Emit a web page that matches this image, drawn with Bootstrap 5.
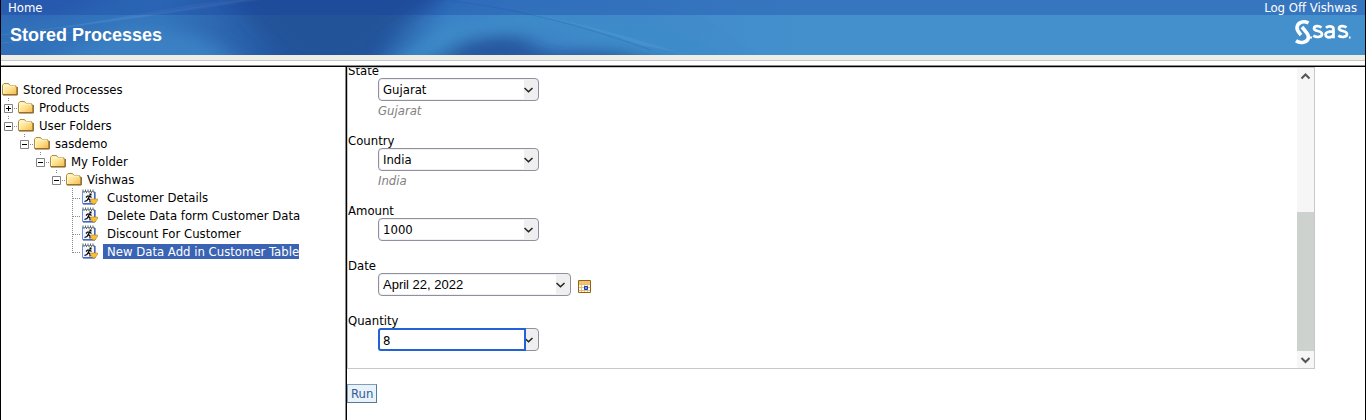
<!DOCTYPE html>
<html lang="en">
<head>
<meta charset="utf-8">
<meta name="viewport" content="width=device-width, initial-scale=1">
<title>Stored Processes</title>
<link href="https://cdn.jsdelivr.net/npm/bootstrap@5.3.0/dist/css/bootstrap.min.css" rel="stylesheet">
<style>
body{font:13px/18px "DejaVu Sans Condensed","DejaVu Sans",sans-serif;color:#000;background:#fff}
.shell{border:solid #000;border-width:0 1px}
.banner{background:#4490cd;overflow:hidden}
.banner .swirl{left:0;top:0}
.topbar{height:15px;line-height:16px;padding:0 8px 0 7px;background:rgba(24,60,160,.3)}
.topbar a{color:#fff;text-decoration:none}
.titlebar{height:40px;padding:0 14px 0 9px}
.titlebar h1{font:bold 18px/40px "Liberation Sans",sans-serif;margin:0;color:#fff}
.strip{height:6px;background:#eeeee6;border-bottom:1px solid #c8c8c8}
.rule{height:5px;border-bottom:1px solid #8c8c8c}
.panes{border-top:1px solid #000}
.tree{width:346px;padding-top:13px;border-right:1px solid #000;box-shadow:inset -1px 0 #8c8c8c}
.tree ul ul ul{padding-left:16px}
.node{height:18px;white-space:nowrap;padding-left:1px}
.node a{color:#000;text-decoration:none;line-height:15px;padding:0 0 0 4px;margin-left:1px}
.leaf{padding-left:7px}
.leaf a{margin-left:5px}
.node a.chosen{background:#3a63b3;color:#fff}
.work{min-height:353px}
.frame{margin-right:50px;border:1px solid #c8c8c8;height:302px}
.prompts{overflow:hidden;padding:0 0 17px}
.field{padding-bottom:16px;flex:none}
.field:last-child{padding-bottom:0}
.field label{display:block;height:16px;line-height:18px}
.field .ctl{margin-left:30px;width:161px;height:23px}
.field .ctl.wide{width:193px}
.hinted{padding-bottom:12px}
.hint{margin-left:30px;line-height:19px;color:#808080;font-style:italic}
.combo{display:block;width:100%;height:100%;appearance:none;border:1px solid #8f8f9d;border-radius:4px;padding:1px 16px 0 4px;font:inherit;color:#000;outline:0;
 background:url("data:image/svg+xml,%3Csvg xmlns='http://www.w3.org/2000/svg' width='14' height='8'%3E%3Cpath d='M.5 2 4.500 5.800 8.500 2' fill='none' stroke='%23222' stroke-width='1.500'/%3E%3C/svg%3E") no-repeat right 0 center,linear-gradient(#efeff0,#efeff0) no-repeat right/14px 100%,#fff;
 box-shadow:inset 0 0 0 1px #f0f0f4}
.wide .combo{font-family:"Liberation Sans",sans-serif;padding-top:0}
.typed{left:0;top:0;width:148px;height:23px;border:2px solid #2361d8;border-radius:3px 0 0 3px;padding:1px 3px 0;font:inherit;outline:0;background:#fff}
.cal{padding:0;border:0;background:none;line-height:0;margin:3px 0 0 7px}
.scroll{width:17px;background:#f6f6f6}
.scroll button{border:0;background:none;padding:0;height:17px;line-height:0}
.thumb{height:139px;background:#cdd2ce}
.run{margin:15px 0 0;padding:0 3px;height:19px;line-height:17px;border:1px solid #7f9fb8;border-right-color:#557a98;border-bottom-color:#557a98;background:#e8f2f8;color:#315c96}
</style>
</head>
<body>
<svg width="0" height="0" class="position-absolute" aria-hidden="true">
<defs>
<linearGradient id="fold" x1="0" y1="0" x2="1" y2="1"><stop offset="0" stop-color="#fffbd0"/><stop offset=".5" stop-color="#ffe291"/><stop offset="1" stop-color="#f2b94c"/></linearGradient>
<symbol id="folder" viewBox="0 0 16 14"><path d="M.5 12.500V3.200L2 1.500h4.500L8 3.500h5.500v1.300h1.200v7.700z" fill="url(#fold)" stroke="#b08a3a"/><path d="M1.500 11.500V5l1-1h11" fill="none" stroke="#fff8cf"/><path d="M1 13h14.300V5" fill="none" stroke="#7d5718"/></symbol>
<symbol id="minus" viewBox="0 0 16 18"><path d="M6.500 0v4M12 10.500h4" stroke="#888" stroke-dasharray="1 1"/><path d="M2.500 6.500h8v8h-8z" fill="#fff" stroke="#848484"/><path d="M4 10.500h5" stroke="#000"/></symbol>
<symbol id="plus" viewBox="0 0 16 18"><use href="#minus"/><path d="M6.500 8v5" stroke="#000"/></symbol>
<symbol id="branch" viewBox="0 0 9 18"><path d="M.5 0v18M1 10.500h8" stroke="#888" stroke-dasharray="1 1"/></symbol>
<symbol id="branchend" viewBox="0 0 9 18"><path d="M.5 0v11M1 10.500h8" stroke="#888" stroke-dasharray="1 1"/></symbol>
<symbol id="proc" viewBox="0 0 17 16"><path d="M1.500 2.500h12v12h-12z" fill="#f2f6ff" stroke="#6f8fe0"/><path d="M2 15h12V3" fill="none" stroke="#1d3f9c"/><path d="M1.500 1.500h12" stroke="#66662a" stroke-width="2" stroke-dasharray="1 1.500"/><path d="M2.500 3.500h11" stroke="#66662a" stroke-dasharray="1 1.500"/><path d="M8.500 4.500h2v2h-2z"/><path d="M8.700 6.500 7.200 9.800M7.200 9.500 6 11.500 3.500 12.500M7.500 9.500l1.500 1.500v2.500M5 8.500 6.500 7h2l2 1.500" fill="none" stroke="#000" stroke-width="1.200"/><path d="M9.500 10h7v1.500L14 15h-2l-2.500-3.500z" fill="#fbc02f" stroke="#b98216" stroke-width=".6"/></symbol>
</defs>
</svg>
<div class="shell">
<header class="banner position-relative">
 <svg class="swirl position-absolute" width="800" height="55" viewBox="0 0 800 55" aria-hidden="true">
  <defs>
   <linearGradient id="base"><stop offset="0" stop-color="#3170b9"/><stop offset=".2" stop-color="#3476bd"/><stop offset=".36" stop-color="#24559f"/><stop offset=".46" stop-color="#23559f"/><stop offset=".56" stop-color="#3a82c6"/><stop offset=".8" stop-color="#4089ca"/><stop offset="1" stop-color="#4490cd"/></linearGradient>
   <filter id="soft" x="-30%" y="-60%" width="160%" height="220%"><feGaussianBlur stdDeviation="12 7"/></filter>
  </defs>
  <path fill="url(#base)" d="M0 0h800v55H0z"/>
  <g filter="url(#soft)">
   <path d="M0-20h150L60 15 0 22z" fill="#2f66b5"/>
   <path d="M20 75 130 25l70 12 60 38z" fill="#3b80c3"/>
   <path d="M210-20h260L400 22 360 60H290z" fill="#235299"/>
   <path d="M370 75 440 28 530 10l150 20 60 40H640L560 25l-80 5-70 40z" fill="#3e8bc9"/>
   <path d="M425 65 465 40l50-5 30 17 70-1 65 17z" fill="#26599f"/>
  </g>
  <path d="M0 35Q120 20 230 2L300-8M0 43Q40 40 80 30" fill="none" stroke="#5b96d2" stroke-opacity=".3"/>
  <path d="M50 30Q130 14 220 0h40Q140 18 50 30" fill="#6ea4d8" fill-opacity=".15"/>
  <path d="M450 0Q550 12 680 53L640 45Q550 12 450 0" fill="#6fb0e0" fill-opacity=".2"/>
  <path d="M450 1Q540 11 650 50" fill="none" stroke="#2565ac" stroke-opacity=".35"/>
 </svg>
 <nav class="topbar position-relative d-flex justify-content-between"><a href="#">Home</a><a href="#">Log Off Vishwas</a></nav>
 <div class="titlebar position-relative d-flex justify-content-between">
  <h1>Stored Processes</h1>
  <div class="d-flex pt-1"><svg width="57" height="26" viewBox="0 0 57 26" role="img" aria-label="SAS" fill="none" stroke="#fff">
   <path d="M14.500 4C9 1.300 3.500 3.500 3 8.500c-.2 3 1.500 4.500 4 7.500" stroke-width="3.600"/>
   <path d="M8 8l4.500 5.500c3.500 4.500 2 8.500-3 9.700-3 .6-5.500 0-7.500-1.400" stroke-width="3.600"/>
   <g stroke-width="2.700"><path d="M27.500 8.500C25 6.500 20.200 6.500 20 9.500c-.1 3.300 8 1.800 8 5.500 0 3.700-5.800 3.600-8.700 1.700"/><path d="M32 8.800c2-2 7.500-2.200 7.500 1.500v9M39.500 12.300c-4 0-8 .4-8 3.300 0 3.800 6.500 3.300 8 .3"/><path d="M52.500 8.500C50 6.500 45.200 6.500 45 9.500c-.1 3.300 8 1.800 8 5.500 0 3.700-5.800 3.600-8.700 1.700"/></g>
   <path d="M16 18.500h2M55 18.500h1.500" stroke-width="1.800"/></svg></div>
 </div>
</header>
<div class="strip"></div><div class="rule"></div>
<div class="panes d-flex">
 <nav class="tree flex-shrink-0" aria-label="Folders">
  <ul class="list-unstyled m-0"><li>
   <div class="node d-flex align-items-center"><svg width="16" height="14"><use href="#folder"/></svg><a href="#">Stored Processes</a></div>
   <ul class="list-unstyled">
    <li><div class="node d-flex align-items-center"><svg width="16" height="18"><use href="#plus"/></svg><svg width="16" height="14"><use href="#folder"/></svg><a href="#">Products</a></div></li>
    <li><div class="node d-flex align-items-center"><svg width="16" height="18"><use href="#minus"/></svg><svg width="16" height="14"><use href="#folder"/></svg><a href="#">User Folders</a></div>
     <ul class="list-unstyled"><li><div class="node d-flex align-items-center"><svg width="16" height="18"><use href="#minus"/></svg><svg width="16" height="14"><use href="#folder"/></svg><a href="#">sasdemo</a></div>
      <ul class="list-unstyled"><li><div class="node d-flex align-items-center"><svg width="16" height="18"><use href="#minus"/></svg><svg width="16" height="14"><use href="#folder"/></svg><a href="#">My Folder</a></div>
       <ul class="list-unstyled"><li><div class="node d-flex align-items-center"><svg width="16" height="18"><use href="#minus"/></svg><svg width="16" height="14"><use href="#folder"/></svg><a href="#">Vishwas</a></div>
        <ul class="list-unstyled">
         <li class="node leaf d-flex align-items-center"><svg width="9" height="18"><use href="#branch"/></svg><svg width="17" height="16"><use href="#proc"/></svg><a href="#">Customer Details</a></li>
         <li class="node leaf d-flex align-items-center"><svg width="9" height="18"><use href="#branch"/></svg><svg width="17" height="16"><use href="#proc"/></svg><a href="#">Delete Data form Customer Data</a></li>
         <li class="node leaf d-flex align-items-center"><svg width="9" height="18"><use href="#branch"/></svg><svg width="17" height="16"><use href="#proc"/></svg><a href="#">Discount For Customer</a></li>
         <li class="node leaf d-flex align-items-center"><svg width="9" height="18"><use href="#branchend"/></svg><svg width="17" height="16"><use href="#proc"/></svg><a href="#" class="chosen">New Data Add in Customer Table</a></li>
        </ul></li></ul></li></ul></li></ul></li>
   </ul></li></ul>
 </nav>
 <main class="work flex-grow-1">
  <div class="frame d-flex">
   <form class="prompts flex-grow-1 d-flex flex-column justify-content-end">
    <div class="field hinted"><label for="state">State</label><div class="ctl"><select class="combo" id="state"><option>Gujarat</option></select></div><div class="hint">Gujarat</div></div>
    <div class="field hinted"><label for="country">Country</label><div class="ctl"><select class="combo" id="country"><option>India</option></select></div><div class="hint">India</div></div>
    <div class="field"><label for="amount">Amount</label><div class="ctl"><select class="combo" id="amount"><option>1000</option></select></div></div>
    <div class="field"><label for="date">Date</label><div class="d-flex align-items-center"><div class="ctl wide"><select class="combo" id="date"><option>April 22, 2022</option></select></div>
     <button type="button" class="cal" aria-label="Pick a date"><svg width="13" height="13" viewBox="0 0 13 13"><path d="M.5.5h12v12H.5z" fill="#fffdf2" stroke="#8f6418"/><path d="M1 1h11v3H1z" fill="#f5c46c"/><path d="M1 4.500h11M1 7.500h11M1 10.500h11M3.500 1v11M6.500 1v11M9.500 1v11" stroke="#e6bd7c"/><path d="M6.500 6.500h3v3h-3z" fill="#6f9cf0" stroke="#1838b0"/></svg></button></div></div>
    <div class="field"><label for="qty">Quantity</label><div class="ctl position-relative"><select class="combo" aria-label="Quantity values" tabindex="-1"><option></option></select><input class="typed position-absolute" id="qty" type="text" value="8" autofocus></div></div>
   </form>
   <div class="scroll d-flex flex-column flex-shrink-0">
    <button type="button" aria-label="Scroll up"><svg width="17" height="17"><path d="M4.500 10.500 8.500 6.500l4 4" fill="none" stroke="#555" stroke-width="2"/></svg></button>
    <div class="flex-grow-1"></div><div class="thumb"></div>
    <button type="button" aria-label="Scroll down"><svg width="17" height="17"><path d="M4.500 7 8.500 11l4-4" fill="none" stroke="#555" stroke-width="2"/></svg></button>
   </div>
  </div>
  <button type="button" class="run">Run</button>
 </main>
</div>
</div>
<script src="https://cdn.jsdelivr.net/npm/bootstrap@5.3.0/dist/js/bootstrap.bundle.min.js"></script>
<script>
const qty=document.getElementById("qty");
qty.focus();
qty.setSelectionRange(1,1);
</script>
</body>
</html>
